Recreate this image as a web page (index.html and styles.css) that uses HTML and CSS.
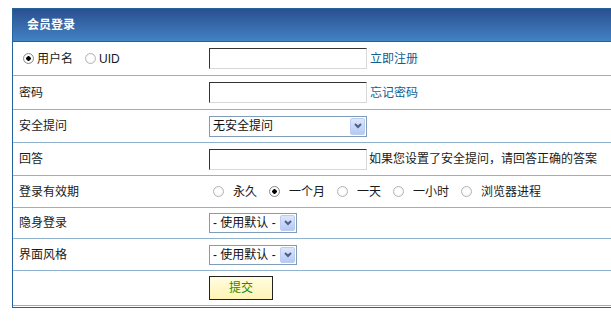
FILE: index.html
```html
<!DOCTYPE html>
<html lang="zh-CN">

<head>
    <meta charset="UTF-8">
    <meta name="viewport" content="width=device-width, initial-scale=1.0">
    <title>会员登录</title>
    <link rel="stylesheet" href="styles.css">
</head>

<body>
    <div class="login-box">
        <div class="login-head">会员登录</div>
        <form action="#" method="post" class="login-form">
            <div class="row row-34">
                <div class="label">
                    <label class="pick pick-tight"><input type="radio" name="loginfield" checked><span>用户名</span></label>
                    <label class="pick pick-tight"><input type="radio" name="loginfield"><span>UID</span></label>
                </div>
                <div class="field">
                    <input type="text" class="text-input" name="username">
                    <a href="#" class="link">立即注册</a>
                </div>
            </div>
            <div class="row row-34">
                <div class="label">密码</div>
                <div class="field">
                    <input type="password" class="text-input" name="password">
                    <a href="#" class="link">忘记密码</a>
                </div>
            </div>
            <div class="row row-33">
                <div class="label">安全提问</div>
                <div class="field">
                    <span class="select select-wide">
                        <select name="questionid">
                            <option>无安全提问</option>
                        </select>
                        <span class="select-arrow"><svg width="8" height="6" viewBox="0 0 8 6"><path d="M1 1 L4 4 L7 1" fill="none" stroke="#4d6185" stroke-width="2"/></svg></span>
                    </span>
                </div>
            </div>
            <div class="row row-33">
                <div class="label">回答</div>
                <div class="field">
                    <input type="text" class="text-input" name="answer">
                    <span class="hint">如果您设置了安全提问，请回答正确的答案</span>
                </div>
            </div>
            <div class="row row-32">
                <div class="label">登录有效期</div>
                <div class="field field-radios">
                    <label class="pick"><input type="radio" name="cookietime"><span>永久</span></label>
                    <label class="pick"><input type="radio" name="cookietime" checked><span>一个月</span></label>
                    <label class="pick"><input type="radio" name="cookietime"><span>一天</span></label>
                    <label class="pick"><input type="radio" name="cookietime"><span>一小时</span></label>
                    <label class="pick"><input type="radio" name="cookietime"><span>浏览器进程</span></label>
                </div>
            </div>
            <div class="row row-31">
                <div class="label">隐身登录</div>
                <div class="field">
                    <span class="select">
                        <select name="loginmode">
                            <option>- 使用默认 -</option>
                        </select>
                        <span class="select-arrow"><svg width="8" height="6" viewBox="0 0 8 6"><path d="M1 1 L4 4 L7 1" fill="none" stroke="#4d6185" stroke-width="2"/></svg></span>
                    </span>
                </div>
            </div>
            <div class="row row-32">
                <div class="label">界面风格</div>
                <div class="field">
                    <span class="select">
                        <select name="styleid">
                            <option>- 使用默认 -</option>
                        </select>
                        <span class="select-arrow"><svg width="8" height="6" viewBox="0 0 8 6"><path d="M1 1 L4 4 L7 1" fill="none" stroke="#4d6185" stroke-width="2"/></svg></span>
                    </span>
                </div>
            </div>
            <div class="row row-35">
                <div class="label"></div>
                <div class="field">
                    <button type="submit" class="submit">提交</button>
                </div>
            </div>
        </form>
    </div>
</body>

</html>
```

FILE: styles.css
```css
* {
    margin: 0;
    padding: 0;
    box-sizing: border-box;
}

html,
body {
    overflow: hidden;
}

body {
    padding: 8px 0 0 12px;
    font-family: "Liberation Sans", "Noto Sans CJK SC", sans-serif;
    font-size: 12px;
    color: #1a1a1a;
    background: #fff;
}

/* box runs off the right edge in the original, so no right border */
.login-box {
    width: 100%;
    border: 1px solid #25649a;
    border-right: none;
    padding-bottom: 1px;
}

.login-head {
    height: 33px;
    line-height: 32px;
    padding-left: 14px;
    color: #fff;
    font-weight: bold;
    background: linear-gradient(#2a4f90, #4283c3);
    border-bottom: 1px solid #2b5f93;
}

.row {
    display: grid;
    grid-template-columns: 196px 1fr;
    align-items: center;
    border-bottom: 1px solid #8fb3cf;
}

.row-35 { height: 35px; }
.row-34 { height: 34px; }
.row-33 { height: 33px; }
.row-32 { height: 32px; }
.row-31 { height: 31px; }

.label {
    display: flex;
    align-items: center;
    padding-left: 6px;
    line-height: 16px;
}

.field {
    display: flex;
    align-items: center;
    line-height: 16px;
    white-space: nowrap;
}

.text-input {
    width: 158px;
    height: 21px;
    border: 1px solid;
    border-color: #333 #d8d8d8 #d8d8d8 #333;
    outline: none;
    font: inherit;
    padding: 0 2px;
}

.link {
    margin-left: 3px;
    color: #13608f;
    text-decoration: none;
}

.hint {
    margin-left: 2px;
}

.select {
    display: inline-flex;
    width: 88px;
    height: 20px;
    padding: 1px;
    border: 1px solid #7f9db9;
    background: #fff;
}

.select-wide {
    width: 158px;
    height: 21px;
}

.select select {
    flex: 1;
    min-width: 0;
    appearance: none;
    border: none;
    outline: none;
    background: transparent;
    font: inherit;
    color: #111;
    padding-left: 2px;
}

.select-arrow {
    width: 15px;
    display: flex;
    justify-content: center;
    align-items: center;
    background: linear-gradient(#dde7fd, #b6c9f5);
    border: 1px solid #bccdf2;
    border-radius: 2px;
}

.pick {
    display: inline-flex;
    align-items: center;
    margin-right: 12px;
}

.pick input {
    appearance: none;
    width: 11px;
    height: 11px;
    margin-right: 9px;
    border: 1px solid #b5b5b5;
    border-radius: 50%;
    background: radial-gradient(circle, #fff 40%, #ececec 100%);
}

.pick input:checked {
    border-color: #8a8a8a;
    background: radial-gradient(circle, #000 2px, #fff 2.5px, #f0f0f0 100%);
}

.field-radios {
    padding-left: 4px;
}

.pick-tight {
    margin-right: 12px;
}

.pick-tight:first-child {
    margin-left: 4px;
}

.pick-tight input {
    margin-right: 3px;
}

.submit {
    width: 64px;
    height: 24px;
    font: inherit;
    color: #2b8a00;
    background: linear-gradient(#fffde2, #fff3b4);
    border: 1px solid #222;
    cursor: pointer;
}
```
